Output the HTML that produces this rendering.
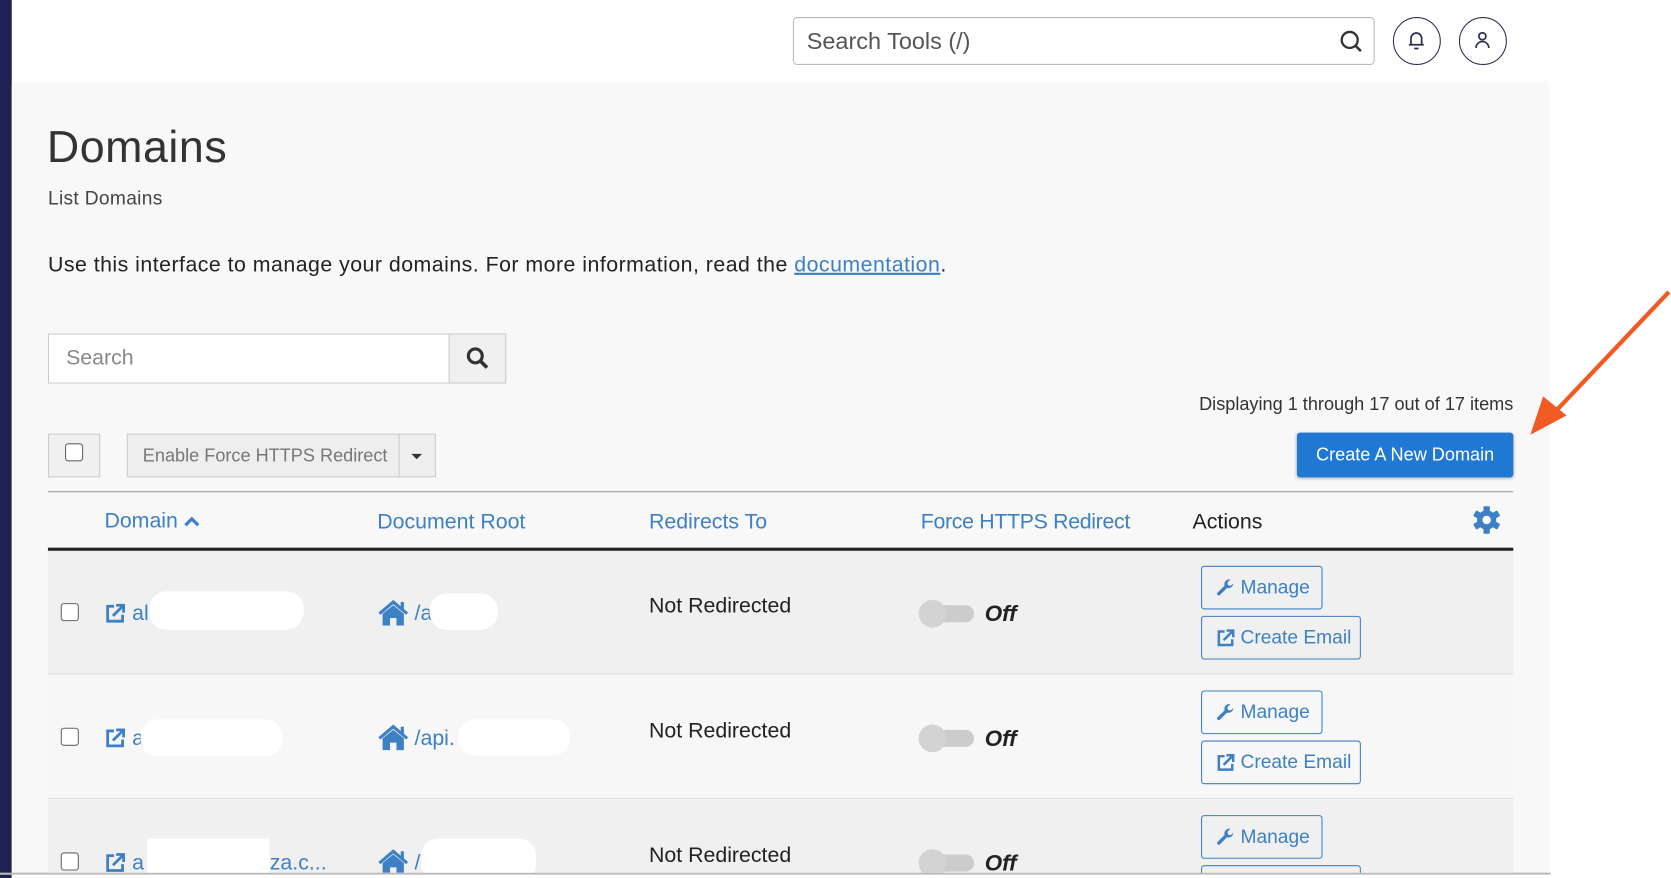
<!DOCTYPE html>
<html><head><meta charset="utf-8"><style>
*{margin:0;padding:0;box-sizing:border-box}
body{width:1671px;height:878px;overflow:hidden;background:#fff;font-family:"Liberation Sans",sans-serif}
#w{position:absolute;left:0;top:0;width:1568px;height:824px;transform:scale(1.0657,1.0655);transform-origin:0 0}
.a{position:absolute}
.lk{color:#3d80c4}
.t{white-space:nowrap}
.btn{position:absolute;border:1px solid #3d80c4;border-radius:3px;color:#3d80c4;font-size:18px;display:flex;align-items:center;padding-left:13px;background:transparent}
.btn svg{margin-right:5px}
.cb{position:absolute;width:17px;height:17px;border:1.5px solid #666;border-radius:3px;background:#fff}
.tg{position:absolute;width:52px;height:26px}
.blob{position:absolute;background:#fff;border-radius:16px}
</style></head><body><div id="w">
<svg width="0" height="0" style="position:absolute"><defs>
<symbol id="ext" viewBox="0 0 20 20"><path d="M9 3H3v14h14v-6" fill="none" stroke="#3d80c4" stroke-width="2.6"/><path d="M8 12L17 3M11 2h7v7" fill="none" stroke="#3d80c4" stroke-width="2.6"/></symbol>
<symbol id="home" viewBox="0 0 30 26"><path d="M15 1L1 13l2 2 12-10 12 10 2-2z" fill="#3d80c4"/><path d="M5 14l10-8 10 8v11h-7v-7h-6v7H5z" fill="#3d80c4"/><rect x="22" y="3" width="3" height="7" fill="#3d80c4"/></symbol>
<symbol id="wr" viewBox="0 0 20 20"><path d="M18 5a5 5 0 01-6.5 4.8L4 17.3a1.8 1.8 0 01-2.5-2.5L9 7.3A5 5 0 0115 1l-3 3 .5 3 3 .5z" fill="#3d80c4"/></symbol>
</defs></svg>
<div class="a" style="left:0;top:0;width:11px;height:824px;background:#1f2152"></div>
<div class="a" style="left:11px;top:80px;width:1442px;height:740px;background:#f8f8f8;box-shadow:0 -2px 4px rgba(0,0,0,.05)"></div>
<div class="a" style="left:0;top:819px;width:1455px;height:2px;background:#bbb"></div>
<div class="a" style="left:744px;top:16px;width:546px;height:45px;border:1px solid #bbb;border-radius:4px;background:#fff"></div>
<div class="a t" style="left:757px;top:26px;font-size:22px;color:#555">Search Tools (/)</div>
<svg class="a" style="left:1256px;top:27px" width="24" height="24" viewBox="0 0 24 24"><circle cx="10.5" cy="10.5" r="7.5" fill="none" stroke="#333" stroke-width="2.2"/><path d="M16 16l5 5" stroke="#333" stroke-width="2.4"/></svg>
<div class="a" style="left:1307px;top:16px;width:45px;height:45px;border:1.5px solid #2a2f4f;border-radius:50%"></div>
<svg class="a" style="left:1319px;top:28px" width="20" height="20" viewBox="0 0 20 20"><path d="M5 14V8a5 5 0 0110 0v6M3 14h14M8 17.5h4" fill="none" stroke="#2a2f4f" stroke-width="1.6"/></svg>
<div class="a" style="left:1369px;top:16px;width:45px;height:45px;border:1.5px solid #2a2f4f;border-radius:50%"></div>
<svg class="a" style="left:1381px;top:28px" width="20" height="20" viewBox="0 0 20 20"><circle cx="10" cy="6" r="3.3" fill="none" stroke="#2a2f4f" stroke-width="1.6"/><path d="M4 17a6 6 0 0112 0" fill="none" stroke="#2a2f4f" stroke-width="1.6"/></svg>
<div class="a t" style="left:44px;top:114px;font-size:42px;color:#333;letter-spacing:0.5px">Domains</div>
<div class="a t" style="left:45px;top:176px;font-size:18px;color:#444;letter-spacing:0.3px">List Domains</div>
<div class="a t" style="left:45px;top:238px;font-size:20px;color:#222;letter-spacing:0.45px">Use this interface to manage your domains. For more information, read the <span class="lk" style="text-decoration:underline">documentation</span>.</div>
<div class="a" style="left:45px;top:313px;width:377px;height:47px;border:1px solid #ccc;background:#fff"></div>
<div class="a t" style="left:62px;top:325px;font-size:20px;color:#888">Search</div>
<div class="a" style="left:421px;top:313px;width:54px;height:47px;border:1px solid #ccc;background:#f0f0f0"></div>
<svg class="a" style="left:437px;top:325px" width="22" height="22" viewBox="0 0 22 22"><circle cx="9" cy="9" r="6.5" fill="none" stroke="#333" stroke-width="3"/><path d="M14 14l6 6" stroke="#333" stroke-width="3.4"/></svg>
<div class="a t" style="left:1010px;top:370px;width:410px;text-align:right;font-size:17px;color:#333">Displaying 1 through 17 out of 17 items</div>
<div class="a" style="left:45px;top:407px;width:49px;height:41px;border:1px solid #ccc;background:#f0f0f0"></div>
<div class="cb" style="left:61px;top:416px"></div>
<div class="a" style="left:119px;top:407px;width:290px;height:41px;border:1px solid #ccc;background:#eee"></div>
<div class="a" style="left:374px;top:407px;width:1px;height:41px;background:#ccc"></div>
<div class="a t" style="left:134px;top:418px;font-size:17px;color:#777">Enable Force HTTPS Redirect</div>
<div class="a" style="left:386px;top:426px;border:5px solid transparent;border-top:5px solid #333"></div>
<div class="a t" style="left:1217px;top:406px;width:203px;height:42px;background:#1f78d1;border-radius:3px;color:#fff;font-size:17px;display:flex;align-items:center;justify-content:center;box-shadow:0 1px 3px rgba(0,0,0,.3)">Create A New Domain</div>
<svg class="a" style="left:1430px;top:270px" width="140" height="140" viewBox="0 0 140 140"><path d="M136 4L24 122" stroke="#f15a22" stroke-width="4"/><path d="M6 138L18 102L40 120Z" fill="#f15a22"/></svg>
<div class="a" style="left:45px;top:461px;width:1375px;height:1px;background:#999"></div>
<div class="a t lk" style="left:98px;top:478px;font-size:20px">Domain <svg width="16" height="12" viewBox="0 0 16 12"><path d="M2 10l6-6 6 6" fill="none" stroke="#3d80c4" stroke-width="3"/></svg></div>
<div class="a t lk" style="left:354px;top:479px;font-size:20px">Document Root</div>
<div class="a t lk" style="left:609px;top:479px;font-size:20px">Redirects To</div>
<div class="a t lk" style="left:864px;top:479px;font-size:20px;letter-spacing:-0.3px">Force HTTPS Redirect</div>
<div class="a t" style="left:1119px;top:479px;font-size:20px;color:#222">Actions</div>
<svg class="a" style="left:1382px;top:475px" width="26" height="26" viewBox="0 0 26 26"><g fill="#3d80c4"><circle cx="13" cy="13" r="9"/><rect x="10" y="0" width="6" height="26" rx="1"/><rect x="10" y="0" width="6" height="26" rx="1" transform="rotate(60 13 13)"/><rect x="10" y="0" width="6" height="26" rx="1" transform="rotate(120 13 13)"/></g><circle cx="13" cy="13" r="4" fill="#f8f8f8"/></svg>
<div class="a" style="left:45px;top:514px;width:1375px;height:3px;background:#222"></div>
<div class="a" style="left:45px;top:517px;width:1375px;height:116px;background:#f0f0f0;border-bottom:1px solid #ddd"></div>
<div class="a" style="left:45px;top:634px;width:1375px;height:116px;background:#f7f7f7;border-bottom:1px solid #ddd"></div>
<div class="a" style="left:45px;top:751px;width:1375px;height:68px;background:#f0f0f0"></div>

<div style="position:absolute;left:0;top:0;width:1453px;height:819px;overflow:hidden">
<!-- row 1 -->
<div class="cb" style="left:57px;top:566px"></div>
<svg class="a" style="left:98px;top:566px" width="20" height="20"><use href="#ext"/></svg>
<div class="a t lk" style="left:124px;top:565px;font-size:20px">al<span style="margin-left:135px">e</span></div>
<div class="blob" style="left:140px;top:555px;width:145px;height:36px"></div>
<svg class="a" style="left:354px;top:562px" width="30" height="26"><use href="#home"/></svg>
<div class="a t lk" style="left:389px;top:565px;font-size:20px">/a</div>
<div class="blob" style="left:403px;top:557px;width:64px;height:34px"></div>
<div class="a t" style="left:609px;top:558px;font-size:20px;color:#222">Not Redirected</div>
<div class="tg" style="left:862px;top:563px"><div class="a" style="left:6px;top:5px;width:46px;height:16px;border-radius:8px;background:#ccc"></div><div class="a" style="left:0;top:0;width:26px;height:26px;border-radius:50%;background:#d3d3d3"></div></div>
<div class="a t" style="left:924px;top:565px;font-size:21px;font-weight:bold;font-style:italic;color:#222">Off</div>
<div class="btn" style="left:1127px;top:531px;width:114px;height:41px"><svg width="18" height="18"><use href="#wr"/></svg>Manage</div>
<div class="btn" style="left:1127px;top:578px;width:150px;height:41px"><svg width="18" height="18"><use href="#ext"/></svg>Create Email</div>
<!-- row 2 -->
<div class="cb" style="left:57px;top:683px"></div>
<svg class="a" style="left:98px;top:683px" width="20" height="20"><use href="#ext"/></svg>
<div class="a t lk" style="left:124px;top:682px;font-size:20px">a</div>
<div class="blob" style="left:132px;top:675px;width:133px;height:35px"></div>
<svg class="a" style="left:354px;top:679px" width="30" height="26"><use href="#home"/></svg>
<div class="a t lk" style="left:389px;top:682px;font-size:20px">/api.</div>
<div class="blob" style="left:430px;top:675px;width:105px;height:34px"></div>
<div class="a t" style="left:609px;top:675px;font-size:20px;color:#222">Not Redirected</div>
<div class="tg" style="left:862px;top:680px"><div class="a" style="left:6px;top:5px;width:46px;height:16px;border-radius:8px;background:#ccc"></div><div class="a" style="left:0;top:0;width:26px;height:26px;border-radius:50%;background:#d3d3d3"></div></div>
<div class="a t" style="left:924px;top:682px;font-size:21px;font-weight:bold;font-style:italic;color:#222">Off</div>
<div class="btn" style="left:1127px;top:648px;width:114px;height:41px"><svg width="18" height="18"><use href="#wr"/></svg>Manage</div>
<div class="btn" style="left:1127px;top:695px;width:150px;height:41px"><svg width="18" height="18"><use href="#ext"/></svg>Create Email</div>
<!-- row 3 -->
<div class="cb" style="left:57px;top:800px"></div>
<svg class="a" style="left:98px;top:800px" width="20" height="20"><use href="#ext"/></svg>
<div class="a t lk" style="left:124px;top:799px;font-size:20px">a<span style="margin-left:118px">za.c...</span></div>
<div class="a" style="left:138px;top:787px;width:115px;height:40px;background:#fff"></div>
<svg class="a" style="left:354px;top:796px" width="30" height="26"><use href="#home"/></svg>
<div class="a t lk" style="left:389px;top:799px;font-size:20px">/</div>
<div class="blob" style="left:395px;top:787px;width:108px;height:40px"></div>
<div class="a t" style="left:609px;top:792px;font-size:20px;color:#222">Not Redirected</div>
<div class="tg" style="left:862px;top:797px"><div class="a" style="left:6px;top:5px;width:46px;height:16px;border-radius:8px;background:#ccc"></div><div class="a" style="left:0;top:0;width:26px;height:26px;border-radius:50%;background:#d3d3d3"></div></div>
<div class="a t" style="left:924px;top:799px;font-size:21px;font-weight:bold;font-style:italic;color:#222">Off</div>
<div class="btn" style="left:1127px;top:765px;width:114px;height:41px"><svg width="18" height="18"><use href="#wr"/></svg>Manage</div>
<div class="btn" style="left:1127px;top:812px;width:150px;height:41px">Create Email</div>
</div>
<div class="a" style="left:11px;top:821px;width:1557px;height:3px;background:#fff"></div>
</div></body></html>
